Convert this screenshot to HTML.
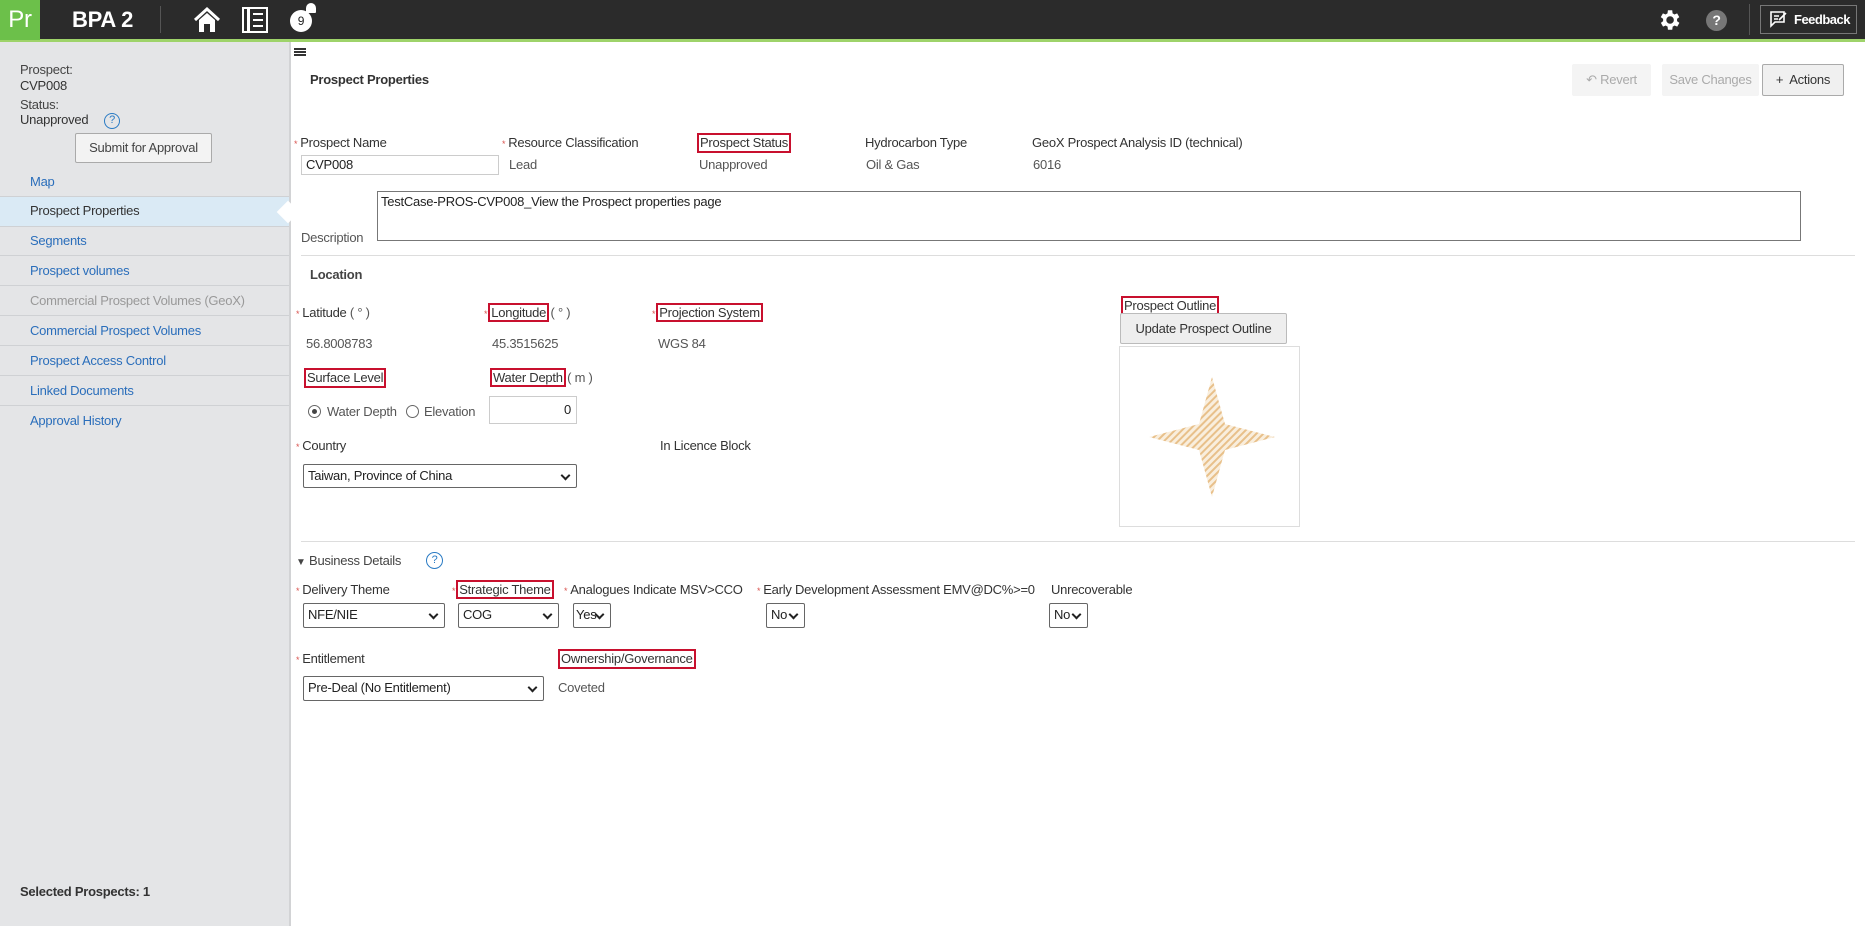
<!DOCTYPE html>
<html><head><meta charset="utf-8"><style>
*{box-sizing:border-box;margin:0;padding:0}
body{width:1865px;height:926px;position:relative;overflow:hidden;background:#fff;font-family:"Liberation Sans",sans-serif;font-size:13px;color:#333;letter-spacing:-0.25px}
.a{position:absolute;white-space:nowrap;line-height:16px}
.v{color:#555}
.r{color:#d9534f;font-size:9px;margin-right:3px}
.rb{outline:2px solid #c8102e;outline-offset:0;padding:0 1px}
.lnk{color:#2a6ebb}
.sel{position:absolute;border:1px solid #666;border-radius:2px;background:#fff;font-size:13px;line-height:22px;padding-left:4px;color:#222}
.sel:after{content:"";position:absolute;right:7px;top:7px;width:5px;height:5px;border-right:2px solid #222;border-bottom:2px solid #222;transform:rotate(45deg)}
.sep{position:absolute;left:0;width:289px;height:1px;background:#cfd1d4}
.btn{position:absolute;border-radius:2px;font-size:13px;text-align:center}
</style></head><body>
<!-- header -->
<div class="a" style="left:0;top:0;width:1865px;height:39px;background:#2b2b2b"></div>
<div class="a" style="left:0;top:39px;width:1865px;height:3px;background:#9ed36a"></div>
<div class="a" style="left:0;top:0;width:40px;height:40px;background:#6cc04a;color:#fff;font-size:24px;line-height:40px;text-align:center">Pr</div>
<div class="a" style="left:72px;top:8px;color:#fff;font-size:22px;font-weight:bold;line-height:24px">BPA 2</div>
<div class="a" style="left:160px;top:6px;width:1px;height:27px;background:#555"></div>
<svg class="a" style="left:193px;top:6px" width="28" height="28" viewBox="0 0 28 28"><path d="M2 14 L14 3 L26 14" stroke="#fff" stroke-width="3" fill="none"/><path d="M6 14 V26 H11 V18 H17 V26 H22 V14 L14 7Z" fill="#fff"/></svg>
<svg class="a" style="left:242px;top:7px" width="26" height="26" viewBox="0 0 26 26"><rect x="1" y="1" width="24" height="24" fill="none" stroke="#fff" stroke-width="2"/><rect x="5" y="1" width="3" height="24" fill="#fff"/><rect x="11" y="6" width="10" height="2" fill="#fff"/><rect x="11" y="12" width="10" height="2" fill="#fff"/><rect x="11" y="18" width="10" height="2" fill="#fff"/></svg>
<div class="a" style="left:290px;top:10px;width:22px;height:22px;border-radius:50%;background:#fff;color:#222;font-size:12px;text-align:center;line-height:22px">9</div>
<div class="a" style="left:306px;top:3px;width:10px;height:10px;border-radius:5px 5px 1px 1px;background:#fff"></div>
<svg class="a" style="left:1656px;top:7px" width="26" height="26" viewBox="0 0 24 24"><path fill="#fff" d="M19.4 13a7.5 7.5 0 000-2l2.1-1.6-2-3.5-2.5 1a7.5 7.5 0 00-1.7-1L15 3h-4l-.4 2.9a7.5 7.5 0 00-1.7 1l-2.5-1-2 3.5L6.6 11a7.5 7.5 0 000 2l-2.1 1.6 2 3.5 2.5-1a7.5 7.5 0 001.7 1L11 21h4l.4-2.9a7.5 7.5 0 001.7-1l2.5 1 2-3.5zM13 15.5a3.5 3.5 0 110-7 3.5 3.5 0 010 7z"/></svg>
<div class="a" style="left:1706px;top:10px;width:21px;height:21px;border-radius:50%;background:#777;color:#fff;font-weight:bold;font-size:14px;text-align:center;line-height:21px">?</div>
<div class="a" style="left:1749px;top:4px;width:1px;height:31px;background:#555"></div>
<div class="a" style="left:1760px;top:5px;width:97px;height:29px;border:1px solid #777;color:#fff;font-weight:bold;font-size:13px;line-height:27px;padding-left:33px;letter-spacing:-.5px">Feedback</div>
<svg class="a" style="left:1770px;top:11px" width="18" height="17" viewBox="0 0 18 17"><path d="M1 1H14V11H5L1 15Z" fill="none" stroke="#fff" stroke-width="1.6"/><path d="M4 5H9M4 8H8M9 9L16 2" stroke="#fff" stroke-width="1.6"/></svg>
<!-- sidebar -->
<div class="a" style="left:0;top:42px;width:289px;height:884px;background:#e4e5e7"></div>
<div class="a" style="left:289px;top:42px;width:2px;height:884px;background:#d2d3d5"></div>
<div class="a" style="left:20px;top:62px;color:#444">Prospect:</div>
<div class="a" style="left:20px;top:78px;color:#333">CVP008</div>
<div class="a" style="left:20px;top:97px;color:#444">Status:</div>
<div class="a" style="left:20px;top:112px;color:#333">Unapproved</div>
<div class="a" style="left:104px;top:113px;width:16px;height:16px;border:1.5px solid #2a7bc4;border-radius:50%;color:#2a7bc4;font-size:11px;text-align:center;line-height:13px">?</div>
<div class="btn a" style="left:75px;top:133px;width:137px;height:30px;border:1px solid #aaa;background:#f3f3f3;line-height:28px;color:#444">Submit for Approval</div>
<div class="a lnk" style="left:30px;top:174px">Map</div>
<div class="sep" style="top:196px"></div>
<div class="a" style="left:0;top:197px;width:289px;height:29px;background:#daeaf5"></div>
<div class="a" style="left:280px;top:204px;width:16px;height:16px;background:#fff;transform:rotate(45deg)"></div>
<div class="a" style="left:30px;top:203px;color:#333">Prospect Properties</div>
<div class="sep" style="top:226px"></div>
<div class="a lnk" style="left:30px;top:233px">Segments</div>
<div class="sep" style="top:255px"></div>
<div class="a lnk" style="left:30px;top:263px">Prospect volumes</div>
<div class="sep" style="top:285px"></div>
<div class="a" style="left:30px;top:293px;color:#999">Commercial Prospect Volumes (GeoX)</div>
<div class="sep" style="top:315px"></div>
<div class="a lnk" style="left:30px;top:323px">Commercial Prospect Volumes</div>
<div class="sep" style="top:345px"></div>
<div class="a lnk" style="left:30px;top:353px">Prospect Access Control</div>
<div class="sep" style="top:375px"></div>
<div class="a lnk" style="left:30px;top:383px">Linked Documents</div>
<div class="sep" style="top:405px"></div>
<div class="a lnk" style="left:30px;top:413px">Approval History</div>
<div class="a" style="left:20px;top:884px;font-weight:bold;color:#333">Selected Prospects: 1</div>
<!-- content -->
<div class="a" style="left:294px;top:48px;width:12px;height:1.5px;background:#333;box-shadow:0 3px 0 #333,0 6px 0 #333"></div>
<div class="a" style="left:310px;top:72px;font-weight:bold;color:#333">Prospect Properties</div>
<div class="btn a" style="left:1572px;top:64px;width:79px;height:32px;background:#f4f4f4;color:#aaa;line-height:32px">&#8630; Revert</div>
<div class="btn a" style="left:1662px;top:64px;width:97px;height:32px;background:#f4f4f4;color:#aaa;line-height:32px">Save Changes</div>
<div class="btn a" style="left:1762px;top:64px;width:82px;height:32px;background:#f0f0f0;border:1px solid #aaa;color:#333;line-height:30px">+&nbsp; Actions</div>

<div class="a" style="left:294px;top:135px"><span class="r">*</span>Prospect Name</div>
<div class="a" style="left:502px;top:135px"><span class="r">*</span>Resource Classification</div>
<div class="a rb" style="left:699px;top:135px">Prospect Status</div>
<div class="a" style="left:865px;top:135px">Hydrocarbon Type</div>
<div class="a" style="left:1032px;top:135px">GeoX Prospect Analysis ID (technical)</div>
<div class="a" style="left:301px;top:155px;width:198px;height:20px;border:1px solid #ccc;padding-left:4px;line-height:18px;color:#222">CVP008</div>
<div class="a v" style="left:509px;top:157px">Lead</div>
<div class="a v" style="left:699px;top:157px">Unapproved</div>
<div class="a v" style="left:866px;top:157px">Oil &amp; Gas</div>
<div class="a v" style="left:1033px;top:157px">6016</div>
<div class="a" style="left:377px;top:191px;width:1424px;height:50px;border:1px solid #777;padding:2px 3px;color:#222">TestCase-PROS-CVP008_View the Prospect properties page</div>
<div class="a v" style="left:301px;top:230px">Description</div>
<div class="a" style="left:301px;top:255px;width:1554px;height:1px;background:#ddd"></div>
<div class="a" style="left:310px;top:267px;font-weight:bold;color:#444">Location</div>

<div class="a" style="left:296px;top:305px"><span class="r">*</span>Latitude <span class="v">( ° )</span></div>
<div class="a" style="left:484px;top:305px"><span class="r">*</span><span class="rb">Longitude</span> <span class="v">( ° )</span></div>
<div class="a" style="left:652px;top:305px"><span class="r">*</span><span class="rb">Projection System</span></div>
<div class="a rb" style="left:1123px;top:298px">Prospect Outline</div>
<div class="btn a" style="left:1120px;top:313px;width:167px;height:31px;background:#eee;border:1px solid #bbb;line-height:29px;color:#333">Update Prospect Outline</div>
<div class="a" style="left:1119px;top:346px;width:181px;height:181px;border:1px solid #ddd"></div>
<svg class="a" style="left:1149px;top:377px" width="126" height="120" viewBox="0 0 126 120"><defs><pattern id="h" width="5" height="5" patternUnits="userSpaceOnUse" patternTransform="rotate(45)"><rect width="2" height="5" fill="#e8c08a"/><rect x="2" width="3" height="5" fill="#f9eedd"/></pattern></defs><path d="M63 0 L76 47 L126 60 L76 73 L63 120 L50 73 L0 60 L50 47Z" fill="url(#h)"/></svg>
<div class="a v" style="left:306px;top:336px">56.8008783</div>
<div class="a v" style="left:492px;top:336px">45.3515625</div>
<div class="a v" style="left:658px;top:336px">WGS 84</div>
<div class="a rb" style="left:306px;top:370px">Surface Level</div>
<div class="a" style="left:492px;top:370px"><span class="rb">Water Depth</span> <span class="v">( m )</span></div>
<div class="a" style="left:308px;top:405px;width:13px;height:13px;border:1px solid #666;border-radius:50%"></div>
<div class="a" style="left:312px;top:409px;width:5px;height:5px;background:#444;border-radius:50%"></div>
<div class="a v" style="left:327px;top:404px">Water Depth</div>
<div class="a" style="left:406px;top:405px;width:13px;height:13px;border:1px solid #666;border-radius:50%"></div>
<div class="a v" style="left:424px;top:404px">Elevation</div>
<div class="a" style="left:489px;top:396px;width:88px;height:28px;border:1px solid #ccc;text-align:right;padding-right:5px;line-height:26px;color:#222">0</div>
<div class="a" style="left:296px;top:438px"><span class="r">*</span>Country</div>
<div class="a" style="left:660px;top:438px">In Licence Block</div>
<div class="sel" style="left:303px;top:464px;width:274px;height:24px">Taiwan, Province of China</div>
<div class="a" style="left:301px;top:541px;width:1554px;height:1px;background:#ddd"></div>

<div class="a" style="left:296px;top:553px;color:#444"><span style="font-size:10px">▼</span> Business Details</div>
<div class="a" style="left:426px;top:552px;width:17px;height:17px;border:1.5px solid #2a7bc4;border-radius:50%;color:#2a7bc4;font-size:11px;text-align:center;line-height:14px">?</div>
<div class="a" style="left:296px;top:582px"><span class="r">*</span>Delivery Theme</div>
<div class="a" style="left:452px;top:582px"><span class="r">*</span><span class="rb">Strategic Theme</span></div>
<div class="a" style="left:564px;top:582px"><span class="r">*</span>Analogues Indicate MSV&gt;CCO</div>
<div class="a" style="left:757px;top:582px"><span class="r">*</span>Early Development Assessment EMV@DC%&gt;=0</div>
<div class="a" style="left:1051px;top:582px">Unrecoverable</div>
<div class="sel" style="left:303px;top:603px;width:142px;height:25px">NFE/NIE</div>
<div class="sel" style="left:458px;top:603px;width:101px;height:25px">COG</div>
<div class="sel" style="left:573px;top:603px;width:38px;height:25px;padding-left:2px">Yes</div>
<div class="sel" style="left:766px;top:603px;width:39px;height:25px">No</div>
<div class="sel" style="left:1049px;top:603px;width:39px;height:25px">No</div>
<div class="a" style="left:296px;top:651px"><span class="r">*</span>Entitlement</div>
<div class="a rb" style="left:560px;top:651px">Ownership/Governance</div>
<div class="sel" style="left:303px;top:676px;width:241px;height:25px">Pre-Deal (No Entitlement)</div>
<div class="a v" style="left:558px;top:680px">Coveted</div>
</body></html>
